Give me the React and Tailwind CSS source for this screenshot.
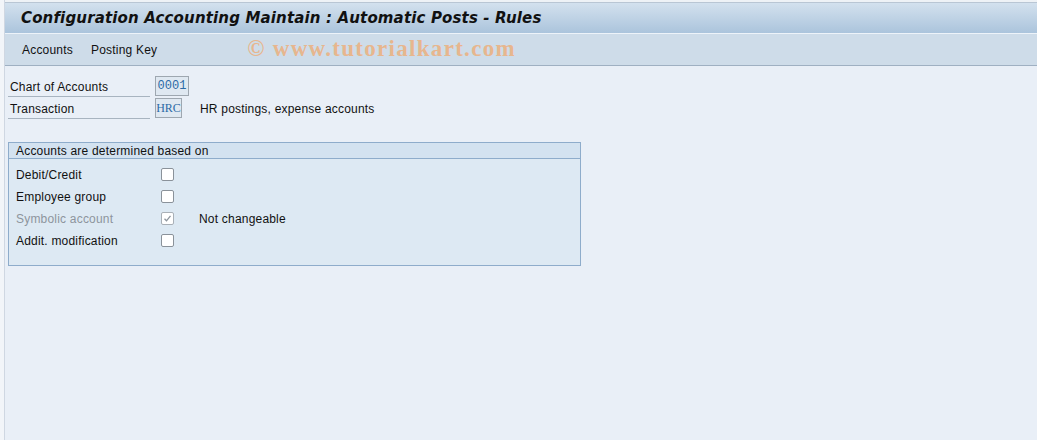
export default function App() {
  const rows = [
    { label: "Debit/Credit", checked: false, disabled: false },
    { label: "Employee group", checked: false, disabled: false },
    { label: "Symbolic account", checked: true, disabled: true, note: "Not changeable" },
    { label: "Addit. modification", checked: false, disabled: false },
  ];
  return (
    <div className="w-[1037px] h-[440px] bg-[#f2f5f9] pl-[4px] overflow-hidden tracking-[0.2px]" style={{ fontFamily: '"Liberation Sans", Arial, sans-serif' }}>
      <div className="h-full border-l border-[#cfd7e2] flex flex-col bg-[#e9eff7]">
        <div className="h-[3px] bg-[#eef2f6] border-b border-[#b9c6d4]" />
        <div className="h-[31px] bg-gradient-to-b from-[#d3e1ee] to-[#abc4dc] flex items-center pl-[16px] border-b border-[#edf3f9]">
          <span className="text-[15px] font-bold italic text-[#111] tracking-[0.15px]" style={{ fontFamily: '"DejaVu Sans", Verdana, sans-serif' }}>Configuration Accounting Maintain : Automatic Posts - Rules</span>
        </div>
        <div className="h-[32px] bg-[#cedce9] border-b border-[#9fb0c2] flex items-center pl-[17px] text-[12px] text-[#111] relative">
          <span>Accounts</span>
          <span className="ml-[18px]">Posting Key</span>
          <span className="ml-[90px] text-[23px] font-bold text-[#e7b68e] tracking-[1.3px]" style={{ fontFamily: '"Liberation Serif", "Times New Roman", serif' }}>© www.tutorialkart.com</span>
        </div>
        <div className="pl-[3px] pt-[9px] flex flex-col">
          <div className="flex items-center h-[22px]">
            <div className="w-[142px] h-[21px] border-b border-[#a8b4c0] text-[12px] text-[#111] pl-[2px] pt-[2px] flex items-center">Chart of Accounts</div>
            <div className="ml-[5px] w-[34px] h-[20px] border border-[#9ea7b0] bg-[#dfe8f1] flex items-center justify-center text-[12px] text-[#2c6aa6] tracking-[0px]" style={{ fontFamily: '"Liberation Mono", monospace' }}>0001</div>
          </div>
          <div className="flex items-center h-[22px]">
            <div className="w-[142px] h-[21px] border-b border-[#a8b4c0] text-[12px] text-[#111] pl-[2px] pt-[2px] flex items-center">Transaction</div>
            <div className="ml-[5px] w-[27px] h-[20px] border border-[#9ea7b0] bg-[#dfe8f1] flex items-center justify-center text-[12px] text-[#2c6aa6] tracking-[0px]" style={{ fontFamily: '"Liberation Serif", serif' }}>HRC</div>
            <span className="ml-[18px] pt-[2px] text-[12px] text-[#111]">HR postings, expense accounts</span>
          </div>
          <div className="mt-[23px] w-[573px] border border-[#8eaccb] bg-[#dde9f3]">
            <div className="h-[16px] bg-[#d3e2f0] border-b border-[#8eaccb] flex items-center pl-[7px] text-[12px] text-[#111]">Accounts are determined based on</div>
            <div className="pt-[4px] pb-[14px] flex flex-col">
              {rows.map((r) => (
                <div key={r.label} className="flex items-center h-[22px]">
                  <span className={"w-[152px] pl-[7px] pt-[2px] text-[12px] " + (r.disabled ? "text-[#8d959d]" : "text-[#111]")}>{r.label}</span>
                  <span className={"w-[13px] h-[13px] rounded-[2px] border bg-white flex items-center justify-center " + (r.disabled ? "border-[#a9b0b7] bg-[#e6eaee]" : "border-[#8a929a]")}>
                    {r.checked && (
                      <svg width="9" height="9" viewBox="0 0 9 9"><path d="M1.5 4.8 L3.5 6.8 L7.5 1.8" fill="none" stroke="#8d959d" strokeWidth="1.3" /></svg>
                    )}
                  </span>
                  {r.note && <span className="ml-[25px] pt-[2px] text-[12px] text-[#111]">{r.note}</span>}
                </div>
              ))}
            </div>
          </div>
        </div>
      </div>
    </div>
  );
}
